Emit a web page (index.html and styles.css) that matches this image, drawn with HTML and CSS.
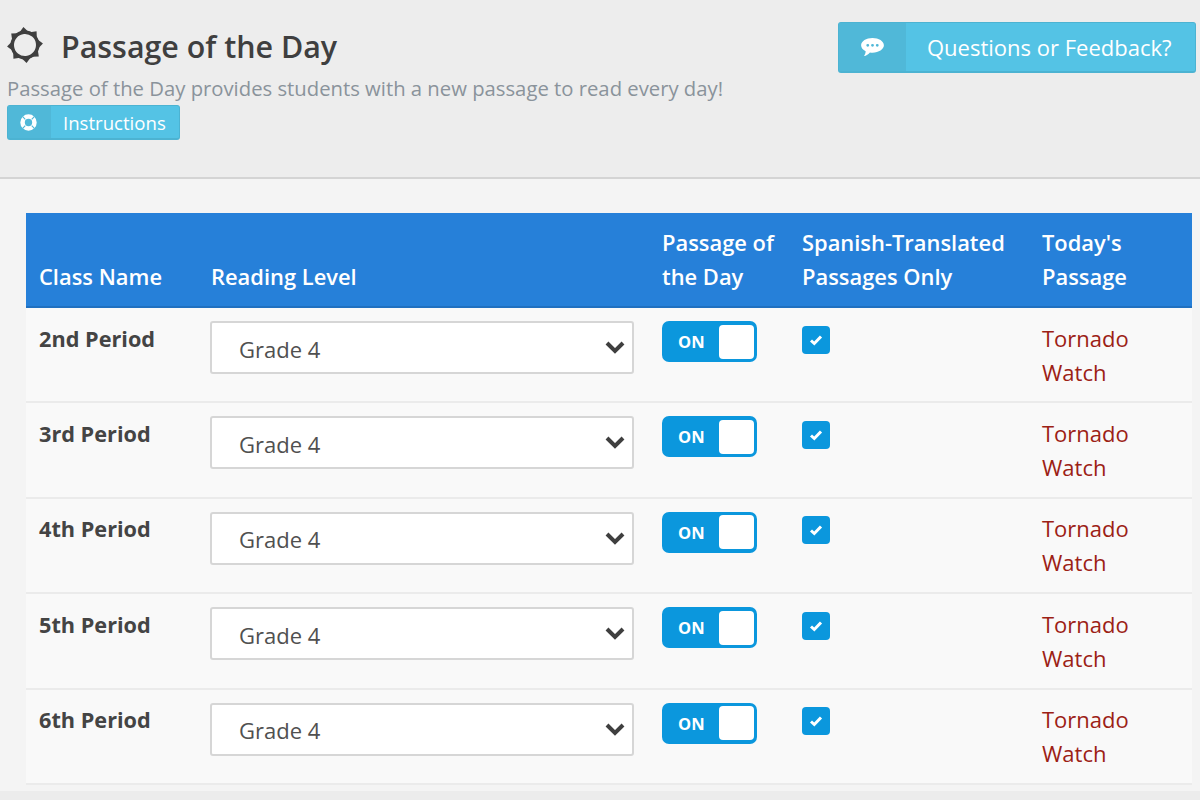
FILE: index.html
```html
<!DOCTYPE html>
<html lang="en">
<head>
    <meta charset="UTF-8">
    <title>Passage of the Day</title>
    <link rel="stylesheet" href="styles.css">
</head>
<body>
<div class="top">
    <div class="top-left">
        <h1 class="title">
            <svg class="sun" viewBox="0 0 36 36" width="36" height="36">
                <g fill="#3f3f3f" transform="rotate(-5 18 18)">
                    <path fill-rule="evenodd" d="M18 3.500a14.500 14.500 0 1 0 0 29 14.500 14.500 0 0 0 0-29zM18 7a11 11 0 1 1 0 22 11 11 0 0 1 0-22z"/>
                    <polygon points="13.500,5 18,0 22.500,5"/>
                    <polygon points="13.500,5 18,0 22.500,5" transform="rotate(45 18 18)"/>
                    <polygon points="13.500,5 18,0 22.500,5" transform="rotate(90 18 18)"/>
                    <polygon points="13.500,5 18,0 22.500,5" transform="rotate(135 18 18)"/>
                    <polygon points="13.500,5 18,0 22.500,5" transform="rotate(180 18 18)"/>
                    <polygon points="13.500,5 18,0 22.500,5" transform="rotate(225 18 18)"/>
                    <polygon points="13.500,5 18,0 22.500,5" transform="rotate(270 18 18)"/>
                    <polygon points="13.500,5 18,0 22.500,5" transform="rotate(315 18 18)"/>
                </g>
            </svg>
            Passage of the Day
        </h1>
        <p class="sub">Passage of the Day provides students with a new passage to read every day!</p>
        <a class="btn btn-small" href="#">
            <span class="btn-icon">
                <svg viewBox="0 0 18 18" width="17" height="17">
                    <circle cx="9" cy="9" r="6.300" fill="none" stroke="#fff" stroke-width="4.800"/>
                    <path stroke="#50b8d8" stroke-width="1.200" d="M2.600 2.600l3 3M15.400 2.600l-3 3M2.600 15.400l3-3M15.400 15.400l-3-3"/>
                </svg>
            </span>
            <span class="btn-text">Instructions</span>
        </a>
    </div>
    <a class="btn btn-big" href="#">
        <span class="btn-icon">
            <svg viewBox="0 0 24 20" width="23" height="19">
                <path fill="#fff" fill-rule="evenodd" d="M12 0c6.600 0 12 3.400 12 7.700s-5.400 7.700-12 7.700c-.9 0-1.800-.1-2.700-.2C7.800 17 5.500 18.700 3 19c1-1.200 1.700-2.900 1.800-5C1.900 12.600 0 10.300 0 7.700 0 3.400 5.400 0 12 0zM7 6.200a1.500 1.500 0 1 0 0 3 1.500 1.500 0 0 0 0-3zM12 6.200a1.500 1.500 0 1 0 0 3 1.500 1.500 0 0 0 0-3zM17 6.200a1.500 1.500 0 1 0 0 3 1.500 1.500 0 0 0 0-3z"/>
            </svg>
        </span>
        <span class="btn-text">Questions or Feedback?</span>
    </a>
</div>
<div class="main">
    <table class="classes">
        <thead>
        <tr>
            <th class="col-name">Class Name</th>
            <th class="col-level">Reading Level</th>
            <th class="col-on">Passage of the Day</th>
            <th class="col-es">Spanish-Translated Passages Only</th>
            <th>Today's Passage</th>
        </tr>
        </thead>
        <tbody>
        <tr>
            <td class="name">2nd Period</td>
            <td><div class="select">Grade 4<svg class="chev" viewBox="0 0 20 14" width="20" height="14"><path fill="none" stroke="#3f3f3f" stroke-width="4" d="M2 3l8 8 8-8"/></svg></div></td>
            <td><div class="toggle"><span>ON</span><i></i></div></td>
            <td><div class="check"><svg viewBox="0 0 14 12" width="14" height="12"><path fill="none" stroke="#fff" stroke-width="3" d="M2 6.500l3.300 3L12 2.500"/></svg></div></td>
            <td class="passage">Tornado Watch</td>
        </tr>
        <tr>
            <td class="name">3rd Period</td>
            <td><div class="select">Grade 4<svg class="chev" viewBox="0 0 20 14" width="20" height="14"><path fill="none" stroke="#3f3f3f" stroke-width="4" d="M2 3l8 8 8-8"/></svg></div></td>
            <td><div class="toggle"><span>ON</span><i></i></div></td>
            <td><div class="check"><svg viewBox="0 0 14 12" width="14" height="12"><path fill="none" stroke="#fff" stroke-width="3" d="M2 6.500l3.300 3L12 2.500"/></svg></div></td>
            <td class="passage">Tornado Watch</td>
        </tr>
        <tr>
            <td class="name">4th Period</td>
            <td><div class="select">Grade 4<svg class="chev" viewBox="0 0 20 14" width="20" height="14"><path fill="none" stroke="#3f3f3f" stroke-width="4" d="M2 3l8 8 8-8"/></svg></div></td>
            <td><div class="toggle"><span>ON</span><i></i></div></td>
            <td><div class="check"><svg viewBox="0 0 14 12" width="14" height="12"><path fill="none" stroke="#fff" stroke-width="3" d="M2 6.500l3.300 3L12 2.500"/></svg></div></td>
            <td class="passage">Tornado Watch</td>
        </tr>
        <tr>
            <td class="name">5th Period</td>
            <td><div class="select">Grade 4<svg class="chev" viewBox="0 0 20 14" width="20" height="14"><path fill="none" stroke="#3f3f3f" stroke-width="4" d="M2 3l8 8 8-8"/></svg></div></td>
            <td><div class="toggle"><span>ON</span><i></i></div></td>
            <td><div class="check"><svg viewBox="0 0 14 12" width="14" height="12"><path fill="none" stroke="#fff" stroke-width="3" d="M2 6.500l3.300 3L12 2.500"/></svg></div></td>
            <td class="passage">Tornado Watch</td>
        </tr>
        <tr>
            <td class="name">6th Period</td>
            <td><div class="select">Grade 4<svg class="chev" viewBox="0 0 20 14" width="20" height="14"><path fill="none" stroke="#3f3f3f" stroke-width="4" d="M2 3l8 8 8-8"/></svg></div></td>
            <td><div class="toggle"><span>ON</span><i></i></div></td>
            <td><div class="check"><svg viewBox="0 0 14 12" width="14" height="12"><path fill="none" stroke="#fff" stroke-width="3" d="M2 6.500l3.300 3L12 2.500"/></svg></div></td>
            <td class="passage">Tornado Watch</td>
        </tr>
        </tbody>
    </table>
</div>
</body>
</html>
```

FILE: styles.css
```css
* {
    margin: 0;
    padding: 0;
    box-sizing: border-box;
}

html, body {
    height: 800px;
    overflow: hidden;
}

body {
    background: #ececec;
    font-family: "Open Sans", sans-serif;
    color: #444;
}

.top {
    height: 179px;
    padding: 21px 4px 0 7px;
    background: #ededed;
    border-bottom: 2px solid #d4d4d4;
    display: flex;
    justify-content: space-between;
    align-items: flex-start;
}

.title {
    display: flex;
    align-items: center;
    gap: 18px;
    height: 50px;
    font-size: 30.400px;
    font-weight: 600;
    color: #3f3f3f;
}

.sun {
    margin-top: -2px;
}

.sub {
    font-size: 20.270px;
    line-height: 28px;
    color: #8a939b;
    margin-top: 3px;
}

.btn {
    display: flex;
    color: #fff;
    text-decoration: none;
    background: #54c3e5;
    border: 1px solid #4cb3d2;
    border-bottom-width: 2px;
    border-radius: 3px;
}

.btn-icon {
    display: flex;
    align-items: center;
    justify-content: center;
    background: #50b8d8;
}

.btn-small {
    width: 173px;
    height: 35px;
    margin-top: 3px;
    font-size: 18.600px;
}

.btn-small .btn-icon {
    width: 43px;
    padding-right: 2px;
}

.btn-small .btn-text {
    padding-left: 12px;
    line-height: 33px;
}

.btn-big {
    width: 358px;
    height: 51px;
    margin-top: 1px;
    font-size: 22px;
}

.btn-big .btn-icon {
    width: 67px;
}

.btn-big .btn-text {
    padding-left: 21px;
    line-height: 48px;
}

.main {
    height: 620px;
    padding: 34px 8px 0 26px;
    background: #f4f4f4;
    border-bottom: 8px solid #ececec;
}

.classes {
    width: 1166px;
    border-collapse: collapse;
    table-layout: fixed;
    font-size: 22px;
}

.classes th {
    height: 94px;
    padding: 0 13px 12px;
    background: #2680d9;
    border-bottom: 2px solid #2070c0;
    color: #fff;
    font-size: 21.900px;
    font-weight: 600;
    line-height: 34px;
    text-align: left;
    vertical-align: bottom;
}

.col-name {
    width: 172px;
}

.col-level {
    width: 451px;
}

.col-on {
    width: 140px;
}

.col-es {
    width: 240px;
}

.classes td {
    height: 95.400px;
    padding: 13px 13px 0;
    background: #f9f9f9;
    border-bottom: 2px solid #ebebeb;
    vertical-align: top;
}

.classes .name {
    padding-top: 13.500px;
    font-size: 21.700px;
    font-weight: 700;
    line-height: 34px;
}

.select {
    display: flex;
    justify-content: space-between;
    align-items: center;
    width: 424px;
    height: 53px;
    margin-left: -1px;
    padding: 2px 7px 0 27px;
    background: #fff;
    border: 2px solid #d6d6d6;
    border-radius: 3px;
    color: #505050;
}

.chev {
    margin-top: -3px;
}

.toggle {
    display: flex;
    justify-content: space-between;
    align-items: center;
    width: 95px;
    height: 41px;
    padding: 0 3px 0 16px;
    background: #0b97dd;
    border-radius: 7px;
    color: #fff;
    font-size: 16.500px;
    font-weight: 700;
}

.toggle i {
    width: 35px;
    height: 34px;
    background: #fff;
    border-radius: 4px;
}

.check {
    display: flex;
    align-items: center;
    justify-content: center;
    width: 28px;
    height: 28px;
    margin-top: 4.500px;
    background: #0b97dd;
    border-radius: 4px;
}

.classes .passage {
    padding-top: 12.500px;
    color: #9c2115;
    line-height: 34px;
}
```
